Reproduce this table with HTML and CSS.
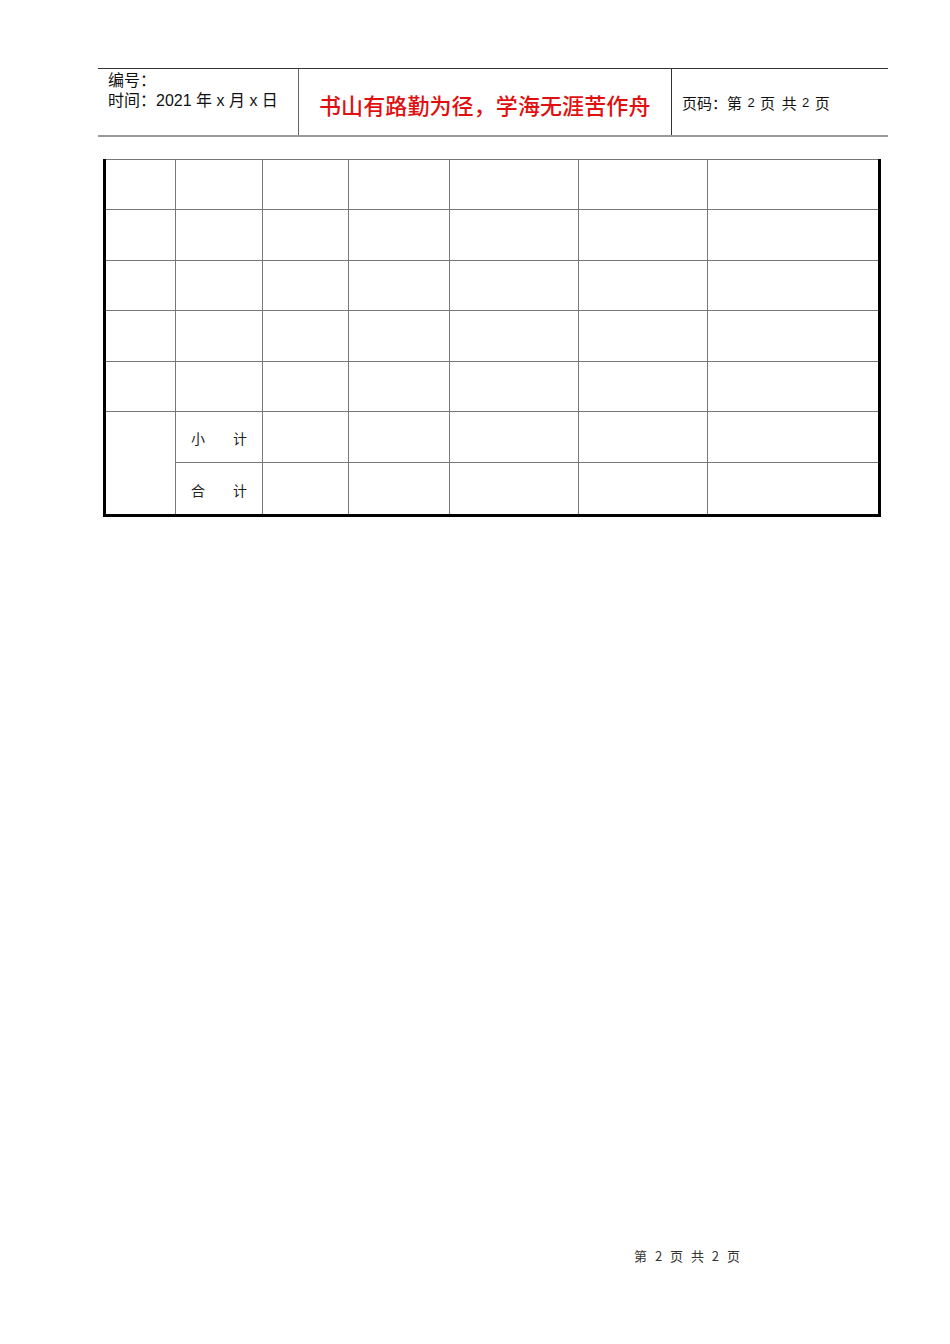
FILE: index.html
```html
<!DOCTYPE html>
<html lang="zh">
<head>
<meta charset="utf-8">
<link rel="stylesheet" href="styles.css">
</head>
<body>
<div class="page">
  <div class="header">
    <div class="hcell hleft">
      <div>编号：</div>
      <div>时间：2021 年 x 月 x 日</div>
    </div>
    <div class="hcell hmid">书山有路勤为径，学海无涯苦作舟</div>
    <div class="hcell hright">页码：第 <span class="sm">2</span> 页&nbsp; 共 <span class="sm">2</span> 页</div>
  </div>

  <table class="grid">
    <colgroup>
      <col class="c1"><col class="c2"><col class="c3"><col class="c4"><col class="c5"><col class="c6"><col class="c7">
    </colgroup>
    <tbody>
      <tr class="ha"><td></td><td></td><td></td><td></td><td></td><td></td><td></td></tr>
      <tr class="hb dark"><td></td><td></td><td></td><td></td><td></td><td></td><td></td></tr>
      <tr class="ha"><td></td><td></td><td></td><td></td><td></td><td></td><td></td></tr>
      <tr class="hb"><td></td><td></td><td></td><td></td><td></td><td></td><td></td></tr>
      <tr class="ha"><td></td><td></td><td></td><td></td><td></td><td></td><td></td></tr>
      <tr class="hc"><td rowspan="2"></td><td class="lbl">小<span class="gap"></span>计</td><td></td><td></td><td></td><td></td><td></td></tr>
      <tr class="hd dark"><td class="lbl">合<span class="gap"></span>计</td><td></td><td></td><td></td><td></td><td></td></tr>
    </tbody>
  </table>

  <div class="footer">第 2 页 共 2 页</div>
</div>
</body>
</html>
```

FILE: styles.css
```css
html, body {
  margin: 0;
  padding: 0;
  background: #fff;
}

body {
  font-family: "Liberation Sans", "Noto Sans CJK SC", sans-serif;
  color: #111;
}

.page {
  width: 950px;
  height: 1344px;
  position: relative;
  padding-top: 68px;
  box-sizing: border-box;
}

.header {
  margin-left: 98px;
  width: 790px;
  height: 66px;
  border-top: 1px solid #333;
  border-bottom: 2px solid #999;
  display: flex;
}

.hcell {
  box-sizing: border-box;
  height: 100%;
}

.hleft {
  width: 201px;
  border-right: 1px solid #666;
  padding: 2px 0 0 10px;
  font-size: 16px;
  line-height: 20px;
}

.hmid {
  width: 373px;
  border-right: 1px solid #333;
  display: flex;
  align-items: center;
  padding-left: 20px;
  padding-top: 4px;
  color: #e01010;
  font-size: 22px;
  font-weight: 500;
  letter-spacing: 0.1px;
  font-family: "Noto Sans CJK SC", sans-serif;
}

.hright {
  width: 216px;
  display: flex;
  align-items: center;
  padding-left: 10px;
  padding-top: 1px;
  font-size: 15px;
  font-family: "Noto Sans CJK SC", sans-serif;
  white-space: pre;
}

.sm {
  font-size: 13px;
  font-family: "Liberation Sans", sans-serif;
  margin: 0 2px;
}

.grid {
  margin-left: 103px;
  margin-top: 22px;
  border-collapse: collapse;
  table-layout: fixed;
  width: 777px;
  border-left: 3px solid #000;
  border-right: 3px solid #000;
  border-top: 1px solid #555;
  border-bottom: 3px solid #000;
}

.c1 { width: 71px; }
.c2 { width: 87px; }
.c3 { width: 86px; }
.c4 { width: 101px; }
.c5 { width: 129px; }
.c6 { width: 129px; }
.c7 { width: 172px; }

.grid td {
  border: 1px solid #777;
  padding: 0;
}

.grid tr.ha td { height: 49px; }
.grid tr.hb td { height: 50px; }
.grid tr.hc td { height: 48px; }
.grid tr.hd td { height: 49px; }

.grid tr.dark td {
  border-top-color: #222;
}

.lbl {
  font-family: "Noto Sans CJK SC", sans-serif;
  font-size: 14px;
  color: #222;
  padding-left: 15px !important;
  padding-top: 2px !important;
}

.gap {
  display: inline-block;
  width: 28px;
}

.footer {
  position: absolute;
  left: 634px;
  top: 1246px;
  font-size: 13px;
  color: #333;
  font-family: "Noto Sans CJK SC", sans-serif;
  word-spacing: 5px;
}
```
